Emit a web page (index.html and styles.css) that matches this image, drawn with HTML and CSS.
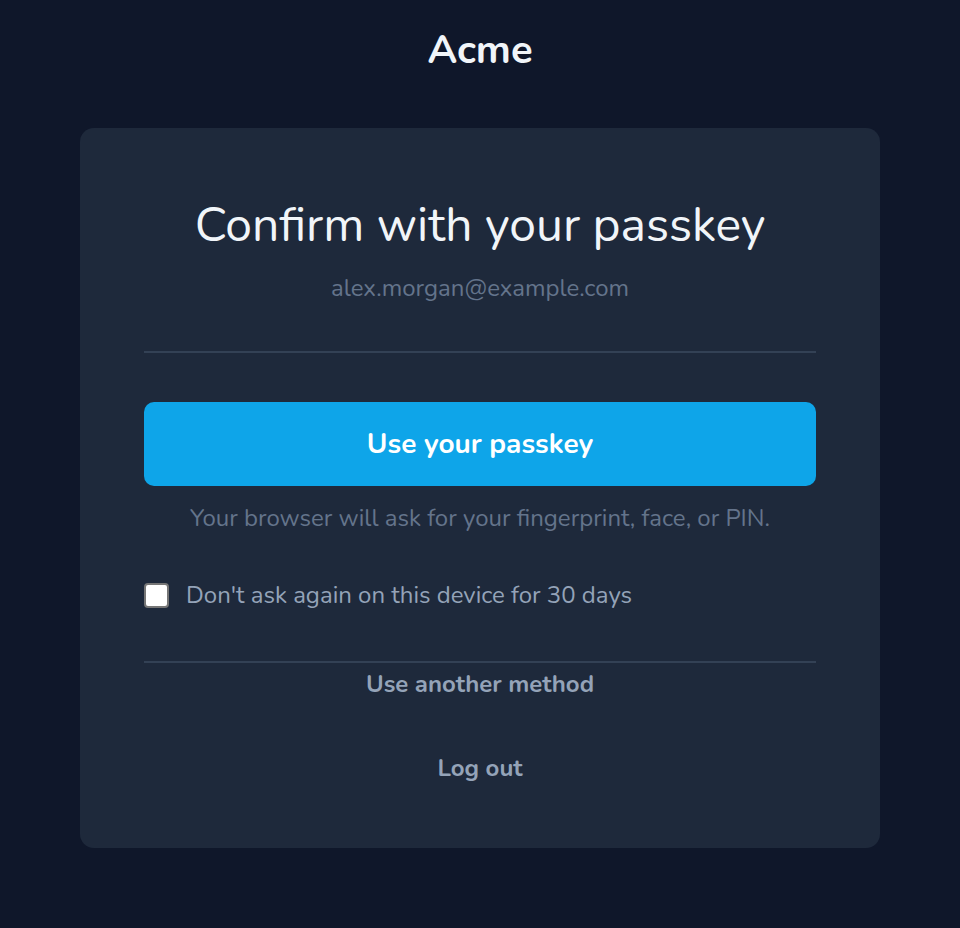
FILE: index.html
```html
<!DOCTYPE html>
<html lang="en">
<head>
<meta charset="utf-8">
<title>Acme – Confirm with your passkey</title>
<link rel="stylesheet" href="styles.css">
</head>
<body>
<header class="brand">Acme</header>
<main class="card">
  <h1 class="title">Confirm with your passkey</h1>
  <p class="email">alex.morgan@example.com</p>
  <hr class="divider divider-top">
  <button class="primary" type="button">Use your passkey</button>
  <p class="hint">Your browser will ask for your fingerprint, face, or PIN.</p>
  <label class="remember">
    <input type="checkbox" class="check">
    <span>Don't ask again on this device for 30 days</span>
  </label>
  <hr class="divider divider-bottom">
  <a class="link link-method" href="#">Use another method</a>
  <a class="link link-logout" href="#">Log out</a>
</main>
</body>
</html>
```

FILE: styles.css
```css
* { box-sizing: border-box; }
html, body { margin: 0; padding: 0; }
body {
  background: #0f172a;
  font-family: "Nunito", "Lato", "Noto Sans", sans-serif;
  color: #f1f5f9;
  min-height: 928px;
  display: flex;
  flex-direction: column;
  align-items: center;
}
.brand {
  font-size: 40px;
  font-weight: 700;
  line-height: 48px;
  margin-top: 26px;
  color: #f1f5f9;
}
.card {
  margin-top: 54px;
  width: 800px;
  height: 720px;
  background: #1e293b;
  border-radius: 14px;
  padding: 68px 64px 0;
  display: flex;
  flex-direction: column;
  align-items: center;
}
.title {
  margin: 0;
  font-size: 48px;
  font-weight: 400;
  line-height: 58px;
  color: #f1f5f9;
}
.email {
  margin: 18px 0 0;
  font-size: 24px;
  line-height: 32px;
  color: #64748b;
}
.divider {
  width: 100%;
  border: 0;
  height: 2px;
  background: #334155;
  margin: 0;
}
.divider-top { margin-top: 47px; }
.primary {
  margin-top: 49px;
  width: 100%;
  height: 84px;
  border: 0;
  border-radius: 10px;
  background: #0ea5e9;
  color: #ffffff;
  font-family: inherit;
  font-size: 28px;
  font-weight: 700;
}
.hint {
  margin: 16px 0 0;
  font-size: 24px;
  line-height: 32px;
  color: #64748b;
}
.remember {
  align-self: flex-start;
  margin-top: 45px;
  display: flex;
  align-items: center;
  gap: 17px;
  font-size: 24px;
  line-height: 32px;
  color: #94a3b8;
}
.check {
  appearance: none;
  -webkit-appearance: none;
  width: 25px;
  height: 25px;
  margin: 0;
  background: #ffffff;
  border: 2px solid #767676;
  border-radius: 4px;
}
.divider-bottom { margin-top: 50px; }
.link {
  font-size: 24px;
  font-weight: 700;
  line-height: 32px;
  color: #94a3b8;
  text-decoration: none;
}
.link-method { margin-top: 5px; }
.link-logout { margin-top: 52px; }
```
